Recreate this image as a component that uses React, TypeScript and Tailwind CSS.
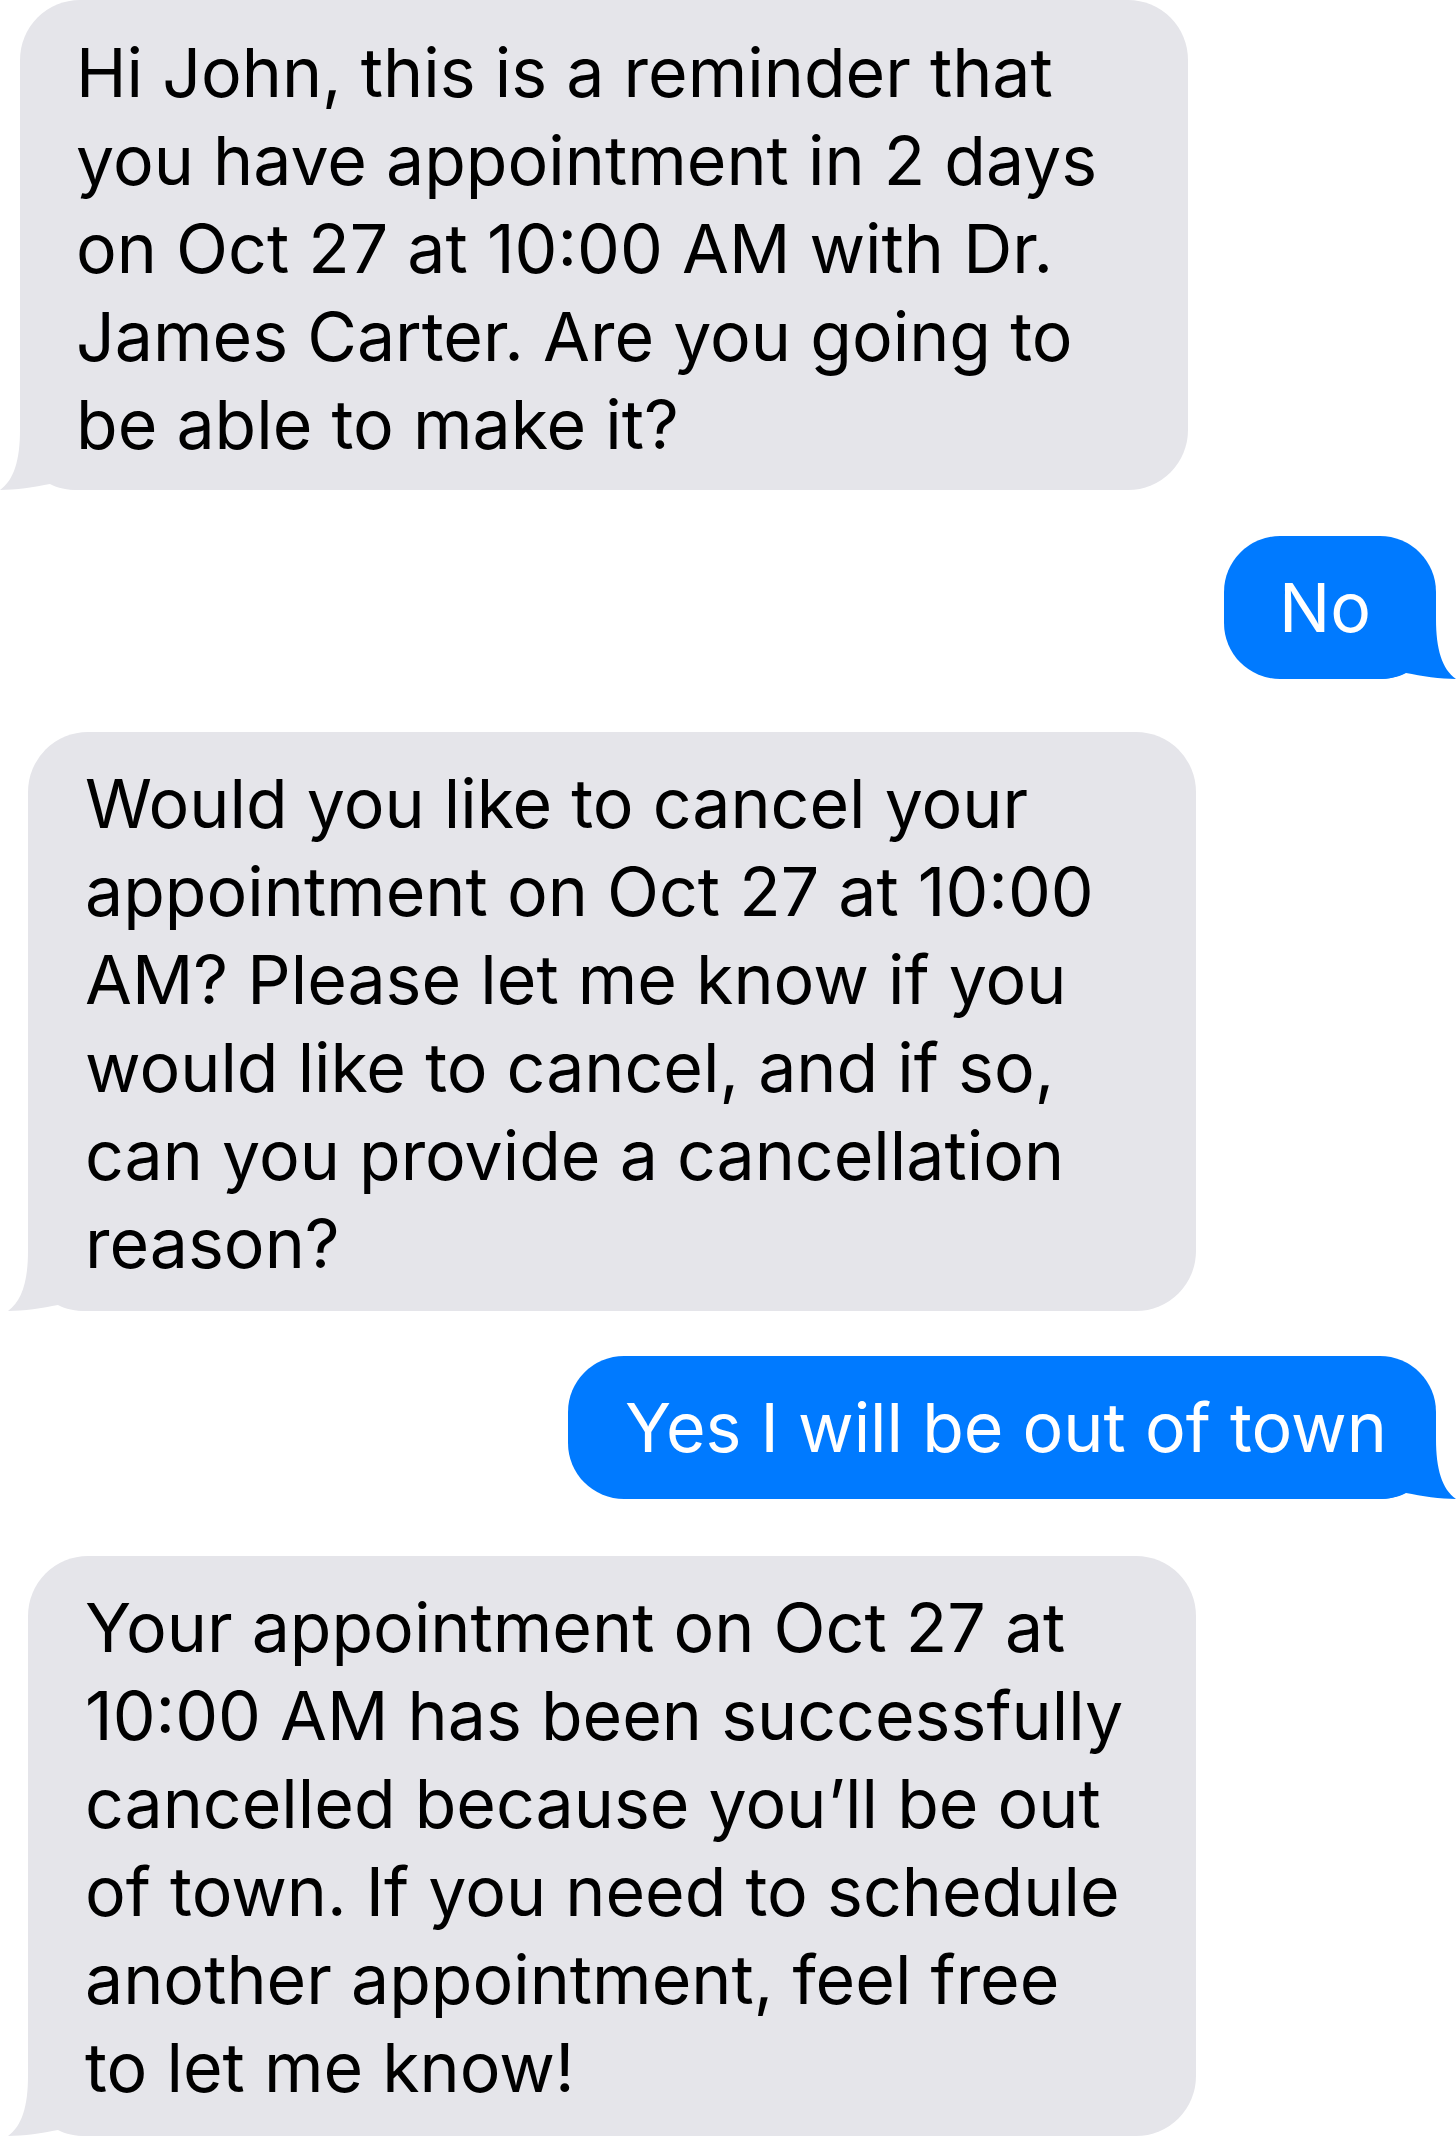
import React from 'react';

const Tail: React.FC<{ side: 'left' | 'right'; color: string }> = ({ side, color }) => (
  <svg
    width="100"
    height="70"
    viewBox="0 0 100 70"
    className={
      side === 'left'
        ? 'absolute bottom-0 left-[-20px]'
        : 'absolute bottom-0 right-[-20px] -scale-x-100'
    }
  >
    <path
      d="M20 0 L20 10 C20 40 14 60 0 70 C15 70 35 67 50 64 C58 68 66 70 80 70 L100 70 L100 0 Z"
      fill={color}
    />
  </svg>
);

const App: React.FC = () => {
  return (
    <div
      className="w-[1456px] h-[2136px] overflow-hidden bg-white flex flex-col text-[68px] leading-[88px]"
      style={{ fontFamily: 'Inter, "Noto Sans", sans-serif' }}
    >
      {/* incoming */}
      <div className="relative ml-[20px] w-[1168px] h-[490px] rounded-[60px] bg-[#e5e5ea] pl-[56px] pt-[28px] text-black whitespace-nowrap">
        <Tail side="left" color="#e5e5ea" />
        <div className="relative">
          <div>Hi John, this is a reminder that</div>
          <div>you have appointment in 2 days</div>
          <div>on Oct 27 at 10:00 AM with Dr.</div>
          <div>James Carter. Are you going to</div>
          <div>be able to make it?</div>
        </div>
      </div>

      <div className="relative self-end mr-[20px] mt-[46px] w-[212px] h-[143px] rounded-[56px] bg-[#007aff] pl-[55px] pt-[27px] text-white whitespace-nowrap">
        <Tail side="right" color="#007aff" />
        <div className="relative">No</div>
      </div>

      <div className="relative ml-[28px] mt-[53px] w-[1168px] h-[579px] rounded-[60px] bg-[#e5e5ea] pl-[57px] pt-[27px] text-black whitespace-nowrap">
        <Tail side="left" color="#e5e5ea" />
        <div className="relative">
          <div>Would you like to cancel your</div>
          <div>appointment on Oct 27 at 10:00</div>
          <div>AM? Please let me know if you</div>
          <div>would like to cancel, and if so,</div>
          <div>can you provide a cancellation</div>
          <div>reason?</div>
        </div>
      </div>

      <div className="relative self-end mr-[20px] mt-[45px] w-[868px] h-[143px] rounded-[56px] bg-[#007aff] pl-[57px] pt-[27px] text-white whitespace-nowrap">
        <Tail side="right" color="#007aff" />
        <div className="relative">Yes I will be out of town</div>
      </div>

      <div className="relative ml-[28px] mt-[57px] w-[1168px] h-[580px] shrink-0 rounded-[60px] bg-[#e5e5ea] pl-[57px] pt-[27px] text-black whitespace-nowrap">
        <Tail side="left" color="#e5e5ea" />
        <div className="relative">
          <div>Your appointment on Oct 27 at</div>
          <div>10:00 AM has been successfully</div>
          <div>cancelled because you’ll be out</div>
          <div>of town. If you need to schedule</div>
          <div>another appointment, feel free</div>
          <div>to let me know!</div>
        </div>
      </div>
    </div>
  );
};

export default App;
